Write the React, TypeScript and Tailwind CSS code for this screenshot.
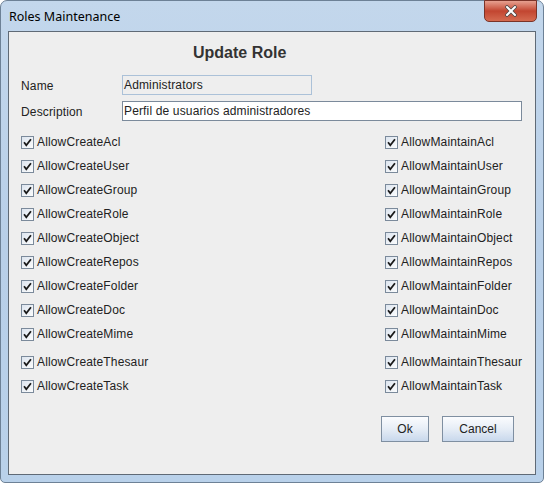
const createPerms = [
  'AllowCreateAcl',
  'AllowCreateUser',
  'AllowCreateGroup',
  'AllowCreateRole',
  'AllowCreateObject',
  'AllowCreateRepos',
  'AllowCreateFolder',
  'AllowCreateDoc',
  'AllowCreateMime',
  'AllowCreateThesaur',
  'AllowCreateTask',
];

const maintainPerms = [
  'AllowMaintainAcl',
  'AllowMaintainUser',
  'AllowMaintainGroup',
  'AllowMaintainRole',
  'AllowMaintainObject',
  'AllowMaintainRepos',
  'AllowMaintainFolder',
  'AllowMaintainDoc',
  'AllowMaintainMime',
  'AllowMaintainThesaur',
  'AllowMaintainTask',
];

const CheckBox = ({ label }: { label: string }) => (
  <div className="flex items-center h-full">
    <div className="w-[13px] h-[13px] border border-[#7b8a9b] bg-gradient-to-br from-[#dde5ef] to-[#fbfcfd] flex items-center justify-center shrink-0">
      <svg width="11" height="11" viewBox="0 0 11 11">
        <path d="M2.6 6 L4.3 8.3 L8.4 3" fill="none" stroke="#1a1a1a" strokeWidth="1.8" strokeLinecap="square" strokeLinejoin="miter" />
      </svg>
    </div>
    <span className="ml-[3px] text-[12px] tracking-[0.15px] text-[#222]">{label}</span>
  </div>
);

const WinButton = ({ label, width }: { label: string; width: string }) => (
  <button
    className={`${width} h-[26px] border border-[#7f8fa1] bg-gradient-to-b from-[#fbfcfe] via-[#e6edf6] to-[#c8d8ec] text-[12px] text-[#222] flex items-center justify-center`}
  >
    {label}
  </button>
);

const App = () => {
  return (
    <div className="w-[544px] h-[483px] bg-white" style={{ fontFamily: '"Liberation Sans", Arial, sans-serif' }}>
      <div className="w-[544px] h-[483px] rounded-t-[7px] rounded-b-[5px] border border-[#6d8196] bg-gradient-to-b from-[#c3d7ec] via-[#b8cfe8] to-[#b9d1ea] flex flex-col">
        {/* title bar */}
        <div className="h-[30px] flex items-start justify-between relative">
          <span className="ml-[8px] mt-[7px] text-[12.5px] text-black" style={{ fontFamily: '"Noto Sans", "Liberation Sans", sans-serif' }}>
            Roles Maintenance
          </span>
          <div className="mr-[6px] -mt-px w-[53px] h-[22px] rounded-b-[5px] border border-[#7a3328] bg-gradient-to-b from-[#e6a090] via-[#c24530] to-[#d46a50] flex items-center justify-center">
            <svg width="16" height="12" viewBox="0 0 16 12">
              <path d="M4 2 L12 10 M12 2 L4 10" stroke="#4a4a4a" strokeWidth="3.6" strokeLinecap="round" />
              <path d="M4 2 L12 10 M12 2 L4 10" stroke="#ffffff" strokeWidth="2" strokeLinecap="round" />
            </svg>
          </div>
        </div>

        {/* content panel */}
        <div className="mx-[7px] h-[444px] border border-[#5f6a76] bg-[#eeeeee] flex flex-col pl-[12px] pt-[11px]">
          <div className="pl-[172px] h-[20px] flex items-center text-[16px] font-bold text-[#333]">
            Update Role
          </div>

          <div className="mt-[12px] h-[20px] flex items-center">
            <span className="w-[101px] pt-[2px] text-[12px] tracking-[0.15px] text-[#222]">Name</span>
            <div className="w-[190px] h-[20px] border border-[#abc1d8] bg-[#eeeeee] flex items-center pl-[1px] text-[12px] tracking-[0.15px] text-[#222]">
              Administrators
            </div>
          </div>

          <div className="mt-[6px] h-[20px] flex items-center">
            <span className="w-[101px] pt-[2px] text-[12px] tracking-[0.15px] text-[#222]">Description</span>
            <div className="w-[400px] h-[20px] border border-[#7b8a9b] bg-white flex items-center pl-[1px] text-[12px] tracking-[0.15px] text-[#222]">
              Perfil de usuarios administradores
            </div>
          </div>

          <div className="mt-[9px] flex">
            <div className="w-[364px] flex flex-col">
              {createPerms.map((p, i) => (
                <div key={p} className={`h-[24px] ${i === 9 ? 'mt-[4px]' : ''}`}>
                  <CheckBox label={p} />
                </div>
              ))}
            </div>
            <div className="flex flex-col">
              {maintainPerms.map((p, i) => (
                <div key={p} className={`h-[24px] ${i === 9 ? 'mt-[4px]' : ''}`}>
                  <CheckBox label={p} />
                </div>
              ))}
            </div>
          </div>

          <div className="mt-[18px] flex justify-end gap-[13px] pr-[21px]">
            <WinButton label="Ok" width="w-[48px]" />
            <WinButton label="Cancel" width="w-[72px]" />
          </div>
        </div>
      </div>
    </div>
  );
};

export default App;
